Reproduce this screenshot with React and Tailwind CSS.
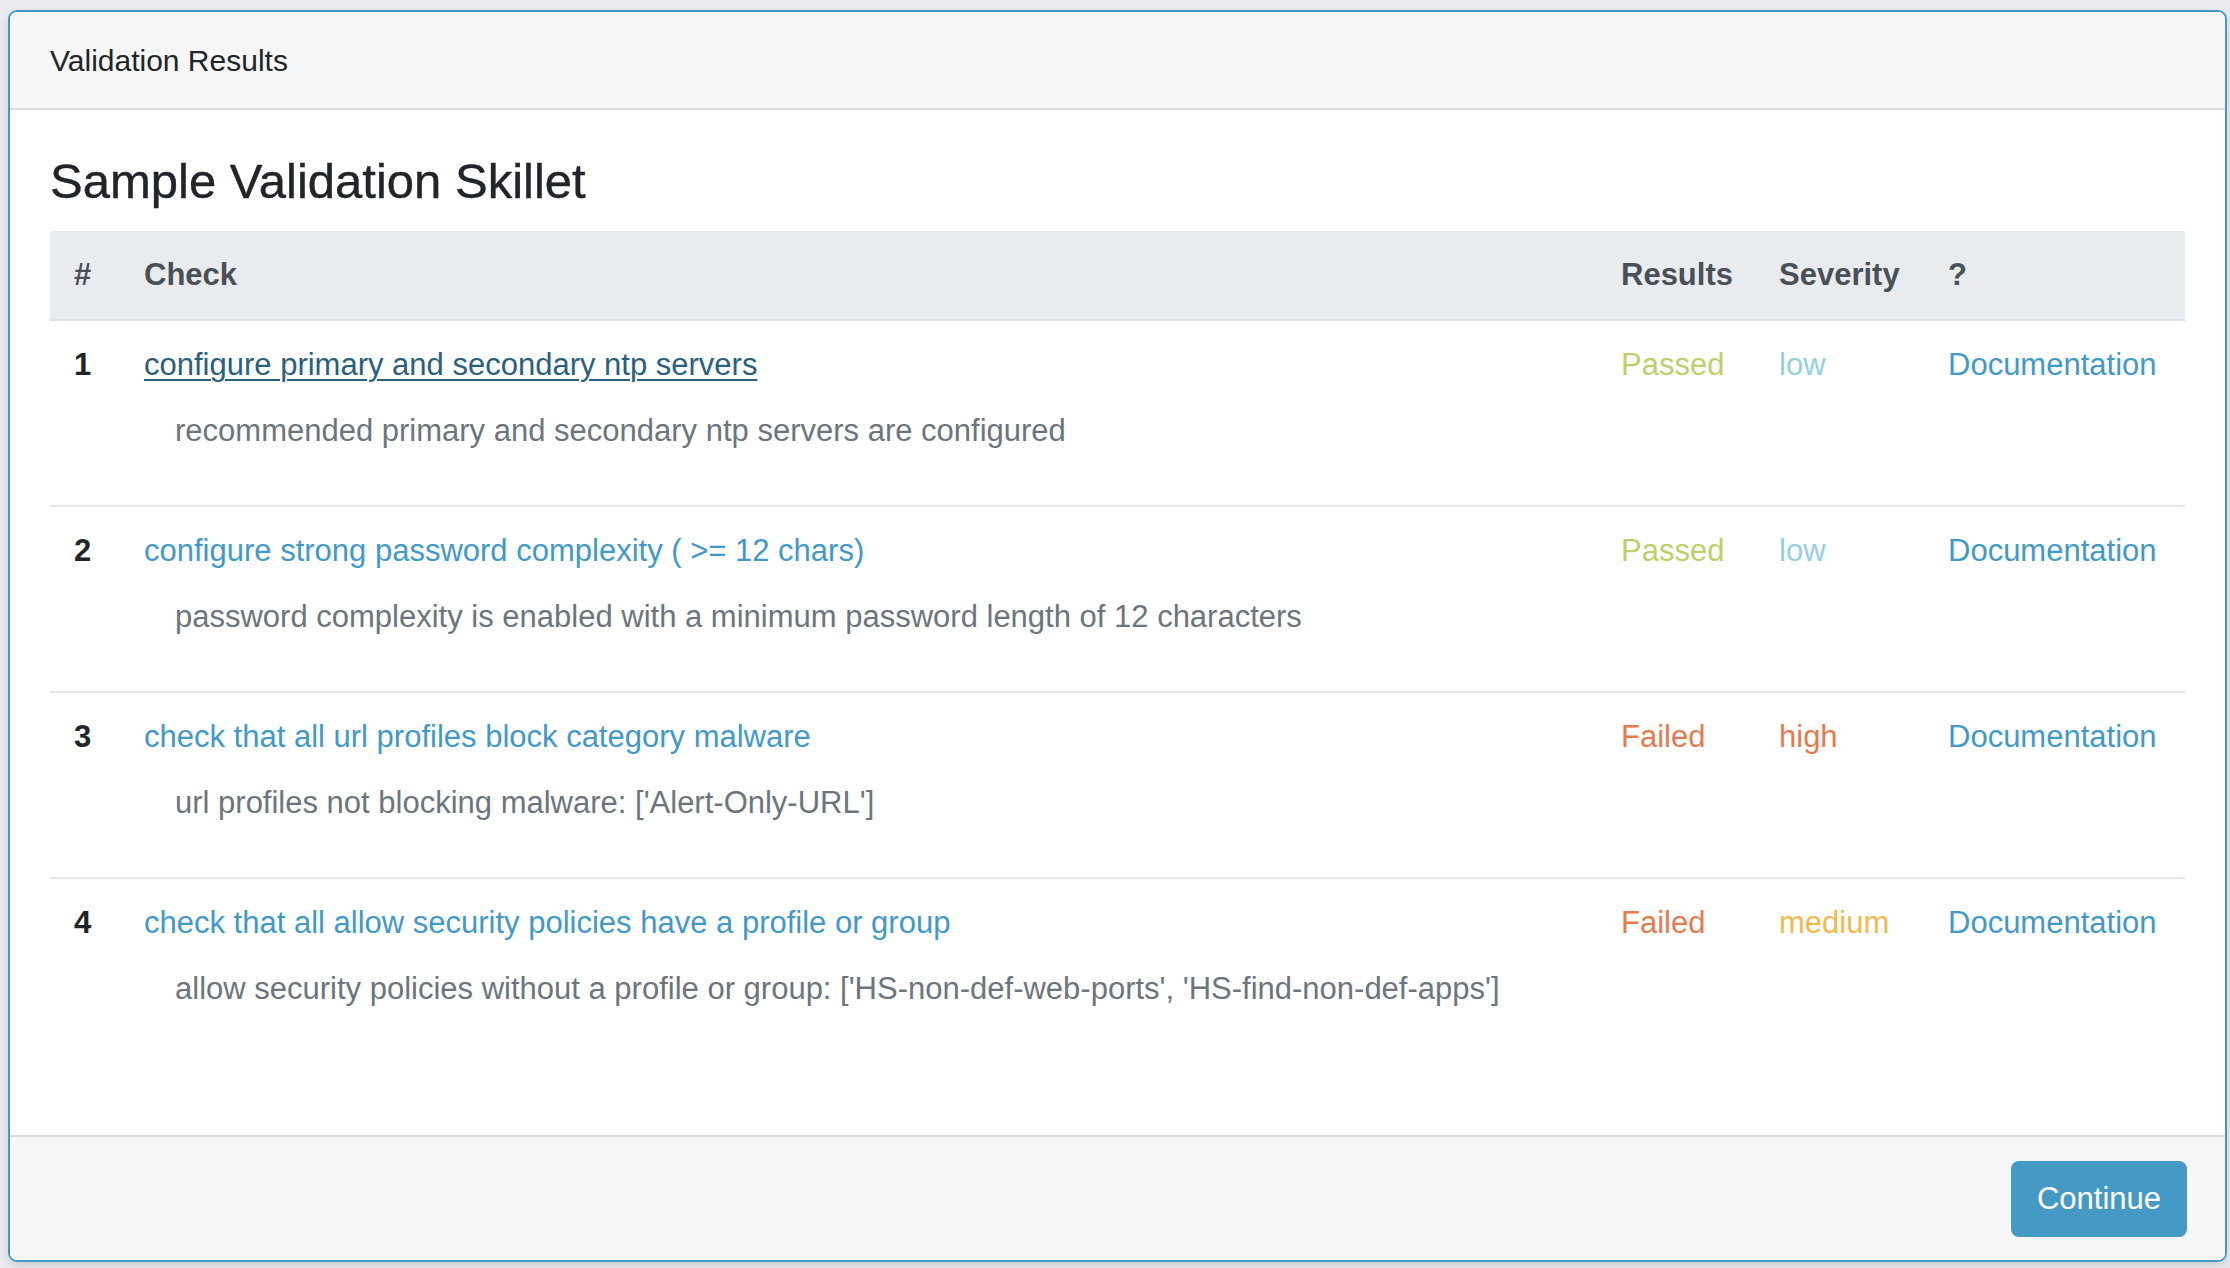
const checks = [
  {
    id: 1,
    name: 'configure primary and secondary ntp servers',
    desc: 'recommended primary and secondary ntp servers are configured',
    result: 'Passed',
    severity: 'low',
    hover: true,
  },
  {
    id: 2,
    name: 'configure strong password complexity ( >= 12 chars)',
    desc: 'password complexity is enabled with a minimum password length of 12 characters',
    result: 'Passed',
    severity: 'low',
  },
  {
    id: 3,
    name: 'check that all url profiles block category malware',
    desc: "url profiles not blocking malware: ['Alert-Only-URL']",
    result: 'Failed',
    severity: 'high',
  },
  {
    id: 4,
    name: 'check that all allow security policies have a profile or group',
    desc: "allow security policies without a profile or group: ['HS-non-def-web-ports', 'HS-find-non-def-apps']",
    result: 'Failed',
    severity: 'medium',
  },
]

const resultColor = {
  Passed: 'text-[#bccf6a]',
  Failed: 'text-[#e8794f]',
}

const severityColor = {
  low: 'text-[#94cfdf]',
  high: 'text-[#e8794f]',
  medium: 'text-[#f2b84b]',
}

function App() {
  return (
    <div className="h-[1268px] w-[2230px] bg-[#e9ebee] pl-[8px] pr-[3px] pt-[10px] font-['Liberation_Sans',Arial,sans-serif] text-[31px] leading-[46px] text-[#212529]">
      <div className="flex h-[1252px] flex-col overflow-hidden rounded-[9px] border-2 border-[#4597c5] bg-white shadow-[0_4px_10px_rgba(0,0,0,0.12)]">
        {/* Header */}
        <div className="border-b-2 border-[#dcdcdc] bg-[#f7f7f7] px-[40px] pt-[26px] pb-[24px] text-[30px]">
          Validation Results
        </div>

        {/* Body */}
        <div className="flex-1 px-[40px] pt-[42px]">
          <h2 className="mb-[21px] text-[49px] leading-[58px] font-medium text-[#212529] [-webkit-text-stroke:0.4px_#212529]">
            Sample Validation Skillet
          </h2>

          <div className="grid grid-cols-[70px_1fr_158px_169px_261px]">
            {/* Table head */}
            <div className="col-span-5 grid grid-cols-subgrid border-b-2 border-[#dee2e6] bg-[#e9ecef] font-bold text-[#495057]">
              <div className="py-[21px] pl-[24px]">#</div>
              <div className="py-[21px] pl-[24px]">Check</div>
              <div className="py-[21px] pl-[24px]">Results</div>
              <div className="py-[21px] pl-[24px]">Severity</div>
              <div className="py-[21px] pl-[24px]">?</div>
            </div>

            {checks.map((c, i) => (
              <div
                key={c.id}
                className={`col-span-5 grid grid-cols-subgrid ${
                  i < checks.length - 1 ? 'border-b-2 border-[#e3e6ea]' : ''
                }`}
              >
                <div className="pl-[24px] pt-[21px] font-bold">{c.id}</div>
                <div className="pl-[24px] pt-[21px]">
                  <a
                    href="#"
                    className={
                      c.hover
                        ? 'text-[#2a5f7d] underline decoration-2 underline-offset-[4px]'
                        : 'text-[#4299c8]'
                    }
                  >
                    {c.name}
                  </a>
                  <p className="mt-[20px] mb-[51px] pl-[31px] text-[#6c757d]">{c.desc}</p>
                </div>
                <div className={`pl-[24px] pt-[21px] ${resultColor[c.result]}`}>{c.result}</div>
                <div className={`pl-[24px] pt-[21px] ${severityColor[c.severity]}`}>{c.severity}</div>
                <div className="pl-[24px] pt-[21px]">
                  <a href="#" className="text-[#4299c8]">
                    Documentation
                  </a>
                </div>
              </div>
            ))}
          </div>
        </div>

        {/* Footer */}
        <div className="flex justify-end border-t-2 border-[#dcdcdc] bg-[#f6f6f6] px-[38px] pt-[24px] pb-[23px]">
          <button className="h-[76px] w-[176px] rounded-[8px] bg-[#4599c5] text-[31px] text-white">
            Continue
          </button>
        </div>
      </div>
    </div>
  )
}

export default App
